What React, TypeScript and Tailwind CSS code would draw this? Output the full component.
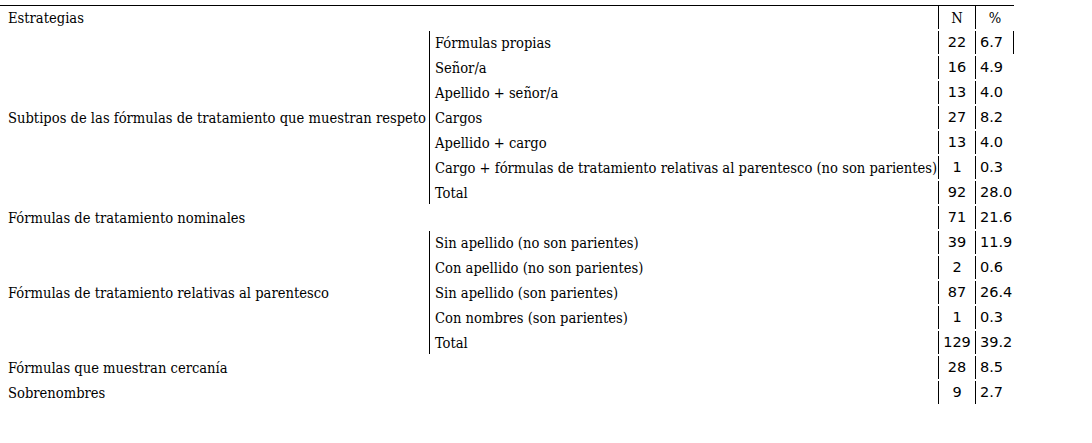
type Row = { sub: string; n: string; p: string };

const respeto: Row[] = [
  { sub: "Fórmulas propias", n: "22", p: "6.7" },
  { sub: "Señor/a", n: "16", p: "4.9" },
  { sub: "Apellido + señor/a", n: "13", p: "4.0" },
  { sub: "Cargos", n: "27", p: "8.2" },
  { sub: "Apellido + cargo", n: "13", p: "4.0" },
  { sub: "Cargo + fórmulas de tratamiento relativas al parentesco (no son parientes)", n: "1", p: "0.3" },
  { sub: "Total", n: "92", p: "28.0" },
];

const parentesco: Row[] = [
  { sub: "Sin apellido (no son parientes)", n: "39", p: "11.9" },
  { sub: "Con apellido (no son parientes)", n: "2", p: "0.6" },
  { sub: "Sin apellido (son parientes)", n: "87", p: "26.4" },
  { sub: "Con nombres (son parientes)", n: "1", p: "0.3" },
  { sub: "Total", n: "129", p: "39.2" },
];

const td = "h-[23px] p-0 align-middle whitespace-nowrap";
const nCell = `${td} border-l border-black text-center font-['DejaVu_Sans',sans-serif] text-[14.5px]`;
const pCell = `${td} border-l border-black pl-[4px] text-left font-['DejaVu_Sans',sans-serif] text-[14.5px]`;

function Group({ label, rows }: { label: string; rows: Row[] }) {
  return (
    <>
      {rows.map((r, i) => (
        <tr key={r.sub}>
          {i === 0 && (
            <td rowSpan={rows.length} className={`${td} pl-[8px] border-r border-black`}>
              {label}
            </td>
          )}
          <td className={`${td} pl-[5px]`}>{r.sub}</td>
          <td className={nCell}>{r.n}</td>
          <td className={`${pCell} ${r.p === "6.7" && r.n === "22" ? "border-r" : ""}`}>{r.p}</td>
        </tr>
      ))}
    </>
  );
}

function Single({ label, n, p }: { label: string; n: string; p: string }) {
  return (
    <tr>
      <td colSpan={2} className={`${td} pl-[8px]`}>
        {label}
      </td>
      <td className={nCell}>{n}</td>
      <td className={pCell}>{p}</td>
    </tr>
  );
}

export default function App() {
  return (
    <div className="w-[1092px] h-[443px] bg-white text-black font-['DejaVu_Serif_Condensed','DejaVu_Serif',serif] text-[14.6px] pt-[3px]">
      <table className="table-fixed border-separate border-spacing-x-0 border-spacing-y-[2px] w-[1014px]">
        <colgroup>
          <col className="w-[430px]" />
          <col className="w-[508px]" />
          <col className="w-[37px]" />
          <col className="w-[39px]" />
        </colgroup>
        <tbody>
          <tr>
            <td colSpan={2} className="h-[24px] p-0 align-middle whitespace-nowrap pl-[8px] border-t border-black">
              Estrategias
            </td>
            <td className="h-[24px] p-0 align-middle border-l border-t border-black text-center">N</td>
            <td className="h-[24px] p-0 align-middle border-l border-t border-black text-center">%</td>
          </tr>
          <Group label="Subtipos de las fórmulas de tratamiento que muestran respeto" rows={respeto} />
          <Single label="Fórmulas de tratamiento nominales" n="71" p="21.6" />
          <Group label="Fórmulas de tratamiento relativas al parentesco" rows={parentesco} />
          <Single label="Fórmulas que muestran cercanía" n="28" p="8.5" />
          <Single label="Sobrenombres" n="9" p="2.7" />
        </tbody>
      </table>
    </div>
  );
}
